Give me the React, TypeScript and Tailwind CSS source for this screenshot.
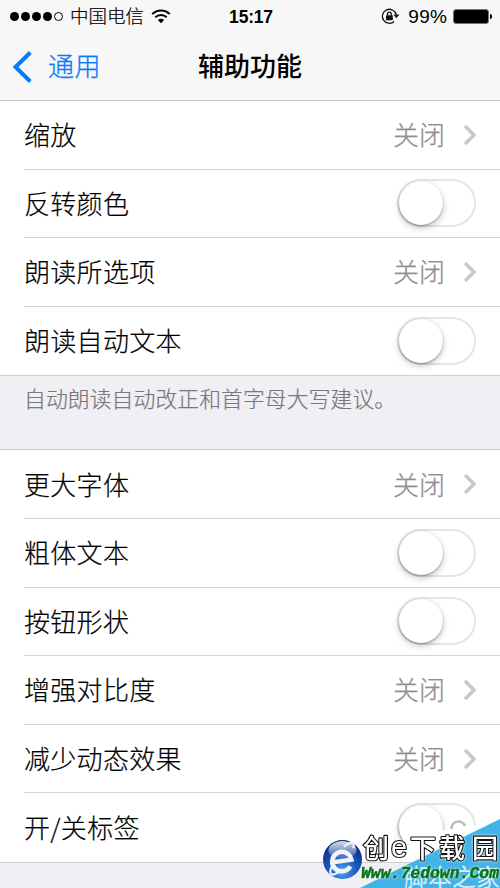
import clsx from "clsx";

interface SettingItem {
  label: string;
  kind: "link" | "toggle";
  value?: string;
}

const visionItems: SettingItem[] = [
  { label: "缩放", kind: "link", value: "关闭" },
  { label: "反转颜色", kind: "toggle" },
  { label: "朗读所选项", kind: "link", value: "关闭" },
  { label: "朗读自动文本", kind: "toggle" },
];

const displayItems: SettingItem[] = [
  { label: "更大字体", kind: "link", value: "关闭" },
  { label: "粗体文本", kind: "toggle" },
  { label: "按钮形状", kind: "toggle" },
  { label: "增强对比度", kind: "link", value: "关闭" },
  { label: "减少动态效果", kind: "link", value: "关闭" },
  { label: "开/关标签", kind: "toggle" },
];

function WifiIcon() {
  return (
    <svg width="20" height="15" viewBox="0 0 20 15" fill="none" stroke="#000" strokeWidth="2">
      <path d="M1.2 5.1C6 .2 14 .2 18.8 5.1" />
      <path d="M4.3 8.2c3.2-3.1 8.2-3.1 11.4 0" />
      <path d="M10 14.2 6.8 11c1.8-1.7 4.6-1.7 6.4 0z" fill="#000" stroke="none" />
    </svg>
  );
}

function RotationLockIcon() {
  return (
    <svg width="19" height="17" viewBox="0 0 19 17" fill="none">
      <path d="M15.2 6.5A7 7 0 1 0 13.2 13.4" stroke="#111" strokeWidth="1.3" />
      <path d="M12.4 6.6h6l-3 3.6z" fill="#111" />
      <rect x="5" y="7.3" width="6.8" height="5" rx=".5" fill="#111" />
      <path d="M6.5 7.5V6a1.9 1.9 0 0 1 3.8 0v1.5" stroke="#111" strokeWidth="1.3" />
    </svg>
  );
}

function StatusBar() {
  return (
    <div className="grid h-8 grid-cols-3 items-center pl-[10px] pr-2">
      <div className="flex items-center">
        <div className="flex gap-[2px]">
          {[0, 1, 2, 3].map((dot) => (
            <span key={dot} className="size-[9px] rounded-full bg-black" />
          ))}
          <span className="size-[9px] rounded-full border border-black" />
        </div>
        <span className="ml-[7px] whitespace-nowrap pt-px text-[18.5px] leading-8 font-light [-webkit-text-stroke:0.2px]">
          中国电信
        </span>
        <span className="ml-[7px]">
          <WifiIcon />
        </span>
      </div>
      <span className="text-center text-[17.5px] font-bold leading-8 tracking-[-0.2px]">15:17</span>
      <div className="flex items-center justify-end">
        <RotationLockIcon />
        <span className="ml-[8px] text-[19px] leading-8 tracking-[0.2px]">99%</span>
        <span className="ml-[6px] h-[15px] w-[36px] rounded-[3px] border-[1.5px] border-[#777] bg-black" />
        <span className="ml-px h-[5px] w-[2px] rounded-r-full bg-black" />
      </div>
    </div>
  );
}

function NavBar() {
  return (
    <div className="grid h-[68px] grid-cols-3 items-center pt-px">
      <button type="button" className="flex items-center pl-[12px] text-[#087aff]">
        <svg width="21" height="32" viewBox="0 0 21 32" fill="none" stroke="currentColor" strokeWidth="4">
          <path d="M18.3 1.5 3.5 16l14.8 14.5" />
        </svg>
        <span className="ml-[15px] text-[26px] leading-8 font-light tracking-[0.5px] [-webkit-text-stroke:0.25px]">
          通用
        </span>
      </button>
      <h1 className="text-center text-[26px] font-medium leading-8">辅助功能</h1>
    </div>
  );
}

function Toggle() {
  return (
    <span className="flex h-[48px] w-[79px] rounded-full border-2 border-[#e5e5e5] bg-white">
      <span className="size-[44px] rounded-full bg-white shadow-[0_3px_7px_rgba(0,0,0,0.22),0_1px_2px_rgba(0,0,0,0.3)]" />
    </span>
  );
}

function SettingRow({ item, last }: { item: SettingItem; last: boolean }) {
  return (
    <li className="flex h-[68.6px] pl-6">
      <div
        className={clsx(
          "flex flex-1 items-center justify-between border-b pr-6",
          last ? "border-transparent" : "border-[#d4d4d6]",
        )}
      >
        <span className="pb-px text-[26px] leading-8 font-light tracking-[0.3px] [-webkit-text-stroke:0.2px]">
          {item.label}
        </span>
        {item.kind === "toggle" ? (
          <Toggle />
        ) : (
          <span className="flex items-center text-[#8e8e93]">
            <span className="pb-px text-[26px] leading-8 font-light [-webkit-text-stroke:0.25px]">{item.value}</span>
            <svg className="ml-[18px]" width="13" height="22" viewBox="0 0 13 22" fill="none" stroke="#c7c7cc" strokeWidth="3.5">
              <path d="m2 2 9 9-9 9" />
            </svg>
          </span>
        )}
      </div>
    </li>
  );
}

function SettingGroup({ items }: { items: SettingItem[] }) {
  return (
    <ul className="bg-white font-['Noto_Sans_CJK_SC','Liberation_Sans',sans-serif] shadow-[0_1px_0_#d0d0d3,0_-1px_0_#c8c8ca]">
      {items.map((item, index) => (
        <SettingRow key={item.label} item={item} last={index === items.length - 1} />
      ))}
    </ul>
  );
}

function Watermark() {
  return (
    <svg className="absolute bottom-0 right-0" width="200" height="108" viewBox="0 0 200 108">
      <defs>
        <radialGradient id="orb" cx="50%" cy="80%" r="75%">
          <stop offset="0" stopColor="#4fa5f0" />
          <stop offset="0.5" stopColor="#1b55bd" />
          <stop offset="1" stopColor="#0b2a7c" />
        </radialGradient>
        <linearGradient id="gloss" x1="0" y1="0" x2="0" y2="1">
          <stop offset="0" stopColor="#fff" stopOpacity=".85" />
          <stop offset="1" stopColor="#fff" stopOpacity=".1" />
        </linearGradient>
      </defs>
      <path d="M103 58 128 52 180 45V76H103z" fill="#fff" />
      <path d="M60 108 200 39v69z" fill="#42b3e8" />
      <path d="M151.5 49v-1a7 7 0 0 1 13.5-2" fill="none" stroke="#b8b8ba" strokeWidth="2.5" />
      <text x="104" y="106" fontSize="24" fill="#d7effa" fontWeight="400" textLength="96">脚本之家</text>
      <circle cx="42.5" cy="79.5" r="19.5" fill="url(#orb)" />
      <ellipse cx="42.5" cy="70" rx="14" ry="9" fill="url(#gloss)" />
      <g fill="none" stroke="#f0f3f8" transform="rotate(-8 42 81)">
        <path d="M33 81h18.5a9.7 9.7 0 1 0-2 6.5" strokeWidth="4.5" />
        <path d="M32 84c-6 8-3 12 6 7M46 67c7-4 12-4 9 3" strokeWidth="2.2" />
      </g>
      <g
        className="drop-shadow-[0_0_1px_white]"
        fill="#fff" stroke="#111" strokeWidth="2.2" paintOrder="stroke"
        fontSize="26" fontWeight="500" strokeLinejoin="round"
      >
        <text x="63" y="78">创</text>
        <text x="91" y="77" fontSize="29">e</text>
        <text x="110" y="78">下</text>
        <text x="139" y="78">载</text>
        <text x="172" y="78">园</text>
      </g>
      <text
        className="drop-shadow-[0_0_1px_white]"
        x="61" y="98" fontSize="17" fontWeight="700" fontStyle="italic" fontFamily="Liberation Mono"
        fill="#08751d" stroke="#08751d" strokeWidth=".5" textLength="138" lengthAdjust="spacingAndGlyphs"
      >
        Www.7edown.Com
      </text>
    </svg>
  );
}

export default function App() {
  return (
    <main className="relative h-[888px] w-[500px] overflow-hidden bg-[#efeff4] font-['Liberation_Sans','Noto_Sans_CJK_SC',sans-serif] text-black">
      <header className="h-[101px] bg-[#f7f7f7]">
        <StatusBar />
        <NavBar />
      </header>
      <SettingGroup items={visionItems} />
      <p className="h-[75px] pl-6 pt-[9px] text-[21.8px] leading-8 font-light tracking-[0.1px] text-[#77777c] [-webkit-text-stroke:0.2px]">
        自动朗读自动改正和首字母大写建议。
      </p>
      <SettingGroup items={displayItems} />
      <Watermark />
    </main>
  );
}
